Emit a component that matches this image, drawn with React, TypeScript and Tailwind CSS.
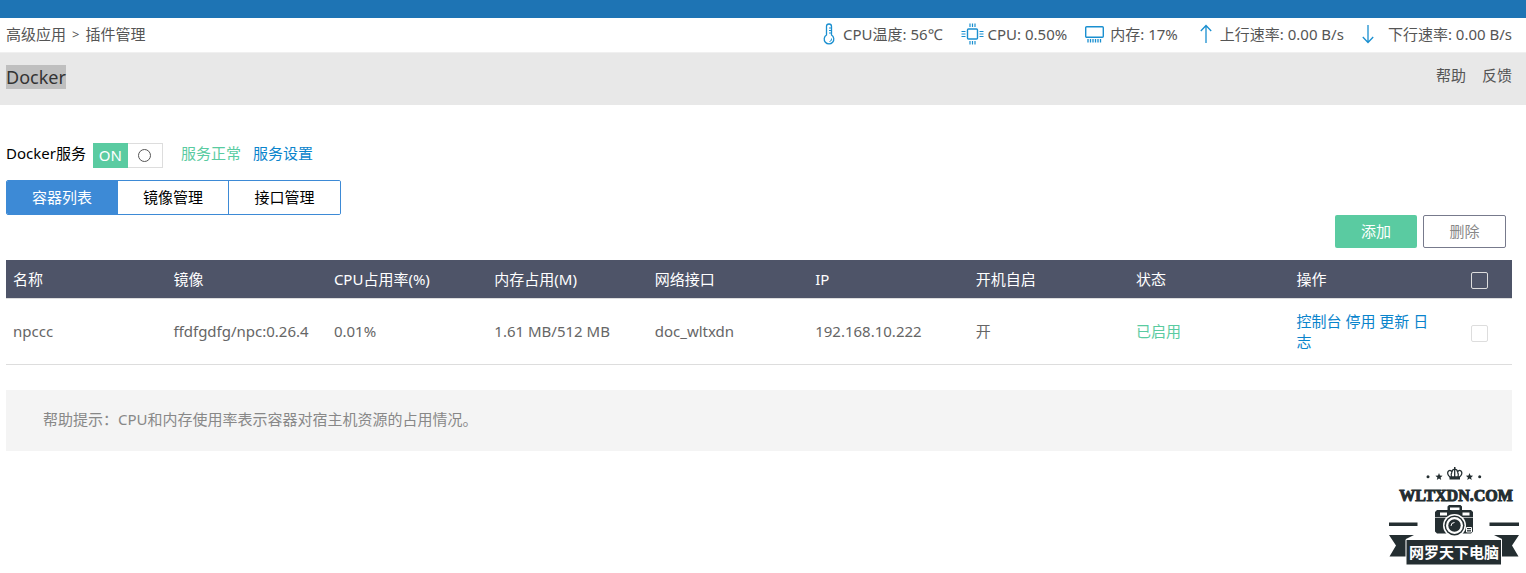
import React, { useState } from 'react';

interface Container {
    name: string;
    image: string;
    cpu: string;
    memory: string;
    network: string;
    ip: string;
    autostart: string;
    status: string;
}

const containers: Container[] = [
    {
        name: 'npccc',
        image: 'ffdfgdfg/npc:0.26.4',
        cpu: '0.01%',
        memory: '1.61 MB/512 MB',
        network: 'doc_wltxdn',
        ip: '192.168.10.222',
        autostart: '开',
        status: '已启用'
    }
];

const columns = ['名称', '镜像', 'CPU占用率(%)', '内存占用(M)', '网络接口', 'IP', '开机自启', '状态', '操作'];
const tabs = ['容器列表', '镜像管理', '接口管理'];
const actions = ['控制台', '停用', '更新', '日志'];

const ThermometerIcon = () => (
    <svg width="12" height="22" viewBox="0 0 12 22" fill="none" stroke="#1a8fd0" strokeWidth="1.3">
        <path d="M3.5 12V3.5a2.5 2.5 0 0 1 5 0V12a4.8 4.8 0 1 1-5 0z" />
        <path d="M6 5h2M6 7.5h2M6 10h2" strokeWidth="1" />
        <path d="M8.5 15.5a2.5 2.5 0 0 1-2 3" strokeWidth="1" />
    </svg>
);

const CpuIcon = () => (
    <svg width="23" height="22" viewBox="0 0 23 22" fill="none" stroke="#1a8fd0">
        <rect x="6.5" y="6" width="10" height="10" rx="1" strokeWidth="1.4" />
        <path d="M9 .5v3.5M11.5 .5v3.5M14 .5v3.5M9 18v3.5M11.5 18v3.5M14 18v3.5" strokeWidth="1.2" />
        <path d="M.5 8.5h4M.5 11h4M.5 13.5h4M18.5 8.5h4M18.5 11h4M18.5 13.5h4" strokeWidth="1.2" />
    </svg>
);

const MemoryIcon = () => (
    <svg width="19" height="18" viewBox="0 0 19 18" fill="none" stroke="#1a8fd0">
        <rect x=".7" y="1.7" width="17.6" height="10.6" rx="1" strokeWidth="1.4" />
        <path d="M3 14v3.5M5.5 14v3.5M8 14v3.5M10.5 14v3.5M13 14v3.5M15.5 14v3.5" strokeWidth="1.3" />
    </svg>
);

const ArrowIcon = ({ down }: { down?: boolean }) => (
    <svg width="12" height="20" viewBox="0 0 12 20" fill="none" stroke="#1a8fd0" strokeWidth="1.3">
        <path d={down ? 'M6 1v17.5M.8 13L6 18.5l5.2-5.5' : 'M6 19V1.5M.8 7L6 1.5 11.2 7'} />
    </svg>
);

const Logo = () => (
    <svg width="130" height="100" viewBox="0 0 130 100" fill="#242e31">
        {/* crown, stars and dots */}
        <path
            d="M61 10c-2.5-2-3-4.5-1.5-6 1.5-1.2 3-.4 3.5 1 .2-2 1.500-3 2.700-2.500 1.300-.5 2.600.5 2.800 2.500.5-1.400 2-2.200 3.500-1 1.500 1.500 1 4-1.500 6zM62.500 10c-1-3 .2-4.500.5-5M65.700 10V3M69 10c1-3-.2-4.500-.5-5"
            fill="none"
            stroke="#242e31"
            strokeWidth="1.3"
        />
        <path d="M60.500 10h10.500v2.500H60.500zM65 0h1.500v3H65z" />
        <path d="M50 6l1 2.500 2.600.2-2 1.700.6 2.600-2.200-1.400-2.200 1.400.6-2.600-2-1.700 2.600-.2zM80.500 6l1 2.500 2.600.2-2 1.700.6 2.600-2.200-1.400-2.200 1.400.6-2.600-2-1.700 2.600-.2z" />
        <circle cx="39" cy="9.7" r="1.5" />
        <circle cx="90.7" cy="9.7" r="1.5" />
        <text
            x="67"
            y="34"
            textAnchor="middle"
            fontSize="16"
            fontWeight="700"
            fontFamily="'Liberation Serif', serif"
            stroke="#242e31"
            strokeWidth="1"
        >
            WLTXDN.COM
        </text>
        {/* camera */}
        <path d="M58.500 43v-3.500l1.500-1.500h11.500l1.500 1.500V43h9l2 2v19.500l-2 2H48l-2-2V45l2-2zM61 40.500V43h9.500v-2.500z" fillRule="evenodd" />
        <path d="M46 50.500h38" stroke="#fff" strokeWidth=".6" />
        <rect x="51" y="45.500" width="7" height="3" fill="#fff" />
        <rect x="73.500" y="45.500" width="7" height="3" fill="#fff" />
        <circle cx="65.500" cy="58.500" r="11.500" fill="#fff" />
        <circle cx="65.500" cy="58.500" r="10" />
        <circle cx="65.500" cy="58.500" r="8.500" fill="#fff" />
        <circle cx="65.500" cy="58.500" r="6.200" />
        <path d="M62 59a3.500 3.500 0 0 1 3.500-3.500" fill="none" stroke="#fff" strokeWidth="1" />
        <path d="M77.500 60.500h5v4.500h-5zM77.500 62.700h5" fill="none" stroke="#fff" strokeWidth="1" />
        {/* ribbon */}
        <path d="M0 55.500h28.500V59H0zM100.500 55.500H130V59h-29.500z" />
        <path d="M0 68h25l-8 4v17.500H.5l6.500-11zM130 68h-25l8 4v17.500h16.500l-6.500-11z" />
        <path d="M17 72.500h95.500V98H17z" stroke="#fff" strokeWidth="1" />
        <text
            x="65"
            y="91"
            textAnchor="middle"
            fontSize="15"
            fontWeight="700"
            fontFamily="'Noto Sans CJK SC', sans-serif"
            fill="#fff"
        >
            网罗天下电脑
        </text>
    </svg>
);

export default function App() {
    const [serviceOn, setServiceOn] = useState(true);
    const [activeTab, setActiveTab] = useState(0);
    const [selected, setSelected] = useState<string[]>([]);

    const allSelected = selected.length === containers.length;

    const toggleRow = (name: string) => {
        setSelected(selected.includes(name) ? selected.filter((n) => n !== name) : [...selected, name]);
    };

    return (
        <div className="bg-white font-['Noto_Sans','Noto_Sans_CJK_SC',sans-serif] text-[15px] leading-5 text-[#555]">
            <div className="h-[18px] bg-[#1e74b4]" />

            <header className="flex h-[35px] items-center justify-between border-b border-[#f0f0f0] pr-3.5 pb-0.5 pl-1.5">
                <nav className="flex gap-1.5">
                    <a href="#apps">高级应用</a>
                    <span className="text-[13px]">&gt;</span>
                    <a href="#plugins">插件管理</a>
                </nav>
                <div className="flex items-center gap-[18px] whitespace-nowrap">
                    <span className="flex items-center gap-2"><ThermometerIcon />CPU温度: 56℃</span>
                    <span className="flex items-center gap-1"><CpuIcon />CPU: 0.50%</span>
                    <span className="flex items-center gap-1.5"><MemoryIcon />内存: 17%</span>
                    <span className="ml-1 flex items-center gap-2"><ArrowIcon />上行速率: 0.00 B/s</span>
                    <span className="flex items-center gap-3.5"><ArrowIcon down />下行速率: 0.00 B/s</span>
                </div>
            </header>

            <div className="flex h-[52px] items-start justify-between bg-[#e8e8e8] pt-3 pr-3.5 pl-1.5">
                <h1 className="bg-[#bfbfbf] text-lg leading-6 text-[#333]">Docker</h1>
                <div className="flex gap-4">
                    <a href="#help">帮助</a>
                    <a href="#feedback">反馈</a>
                </div>
            </div>

            <main className="pt-[38px] pr-3.5 pl-1.5">
                <div className="flex h-[25px] items-start">
                    <label htmlFor="service" className="mr-[7px] text-black">Docker服务</label>
                    <input
                        id="service"
                        type="checkbox"
                        className="peer sr-only"
                        checked={serviceOn}
                        onChange={() => setServiceOn(!serviceOn)}
                    />
                    <label htmlFor="service" className="flex h-[25px] w-[70px] cursor-pointer">
                        <span className="flex w-[35px] items-center justify-center bg-[#5acba1] pb-0.5 text-white">
                            {serviceOn ? 'ON' : 'OFF'}
                        </span>
                        <span className="flex w-[35px] items-center justify-center border border-l-0 border-[#ddd]">
                            <span className="size-[13px] rounded-full border border-[#555]" />
                        </span>
                    </label>
                    <span className="ml-[18px] text-[#5acba1]">服务正常</span>
                    <a href="#settings" className="ml-3 text-[#0a84cc]">服务设置</a>
                </div>

                <div className="mt-3 flex">
                    <div className="flex h-[35px] divide-x divide-[#3d8ad6] overflow-hidden rounded-xs border border-[#3d8ad6]">
                        {tabs.map((tab, i) => (
                            <button
                                key={tab}
                                className={`w-[111px] pb-0.5 ${i === activeTab ? 'bg-[#3d8ad6] text-white' : 'bg-white text-black'}`}
                                onClick={() => setActiveTab(i)}
                            >
                                {tab}
                            </button>
                        ))}
                    </div>
                </div>

                <div className="flex justify-end gap-1.5 pr-1.5">
                    <button className="h-[33px] w-[82px] rounded-xs bg-[#5acba1] pb-0.5 text-white">添加</button>
                    <button className="h-[33px] w-[83px] rounded-xs border border-[#777a8c] pb-0.5 text-[#888]">删除</button>
                </div>

                <table className="mt-3 w-full table-fixed text-left text-[#666]">
                    <thead>
                        <tr className="h-[38px] border-b border-[#ddd] bg-[#4e5468] text-white">
                            {columns.map((column) => (
                                <th key={column} className="px-[7px] font-normal">{column}</th>
                            ))}
                            <th className="w-[62px] pt-1 pl-[21px]">
                                <input
                                    type="checkbox"
                                    aria-label="全选"
                                    className="block size-[17px] appearance-none rounded-xs border border-[#ddd] checked:bg-[#3d8ad6]"
                                    checked={allSelected}
                                    onChange={() => setSelected(allSelected ? [] : containers.map((c) => c.name))}
                                />
                            </th>
                        </tr>
                    </thead>
                    <tbody>
                        {containers.map((c) => (
                            <tr key={c.name} className="h-[66px] border-b border-[#ddd]">
                                <td className="px-[7px]">{c.name}</td>
                                <td className="px-[7px]">{c.image}</td>
                                <td className="px-[7px]">{c.cpu}</td>
                                <td className="px-[7px]">{c.memory}</td>
                                <td className="px-[7px]">{c.network}</td>
                                <td className="px-[7px]">{c.ip}</td>
                                <td className="px-[7px]">{c.autostart}</td>
                                <td className="px-[7px] text-[#5acba1]">{c.status}</td>
                                <td className="px-[7px] text-[#0a84cc]">
                                    {actions.map((action) => (
                                        <React.Fragment key={action}>
                                            <a href={`#${action}`}>{action}</a>{' '}
                                        </React.Fragment>
                                    ))}
                                </td>
                                <td className="pt-1 pl-[21px]">
                                    <input
                                        type="checkbox"
                                        aria-label={c.name}
                                        className="block size-[17px] appearance-none rounded-xs border border-[#ddd] checked:bg-[#3d8ad6]"
                                        checked={selected.includes(c.name)}
                                        onChange={() => toggleRow(c.name)}
                                    />
                                </td>
                            </tr>
                        ))}
                    </tbody>
                </table>

                <p className="mt-[25px] bg-[#f4f4f4] px-[37px] pt-[19px] pb-[22px] text-[#888]">
                    帮助提示：CPU和内存使用率表示容器对宿主机资源的占用情况。
                </p>
            </main>

            <footer className="mt-4 flex justify-end pr-[7px]">
                <Logo />
            </footer>
        </div>
    );
}
